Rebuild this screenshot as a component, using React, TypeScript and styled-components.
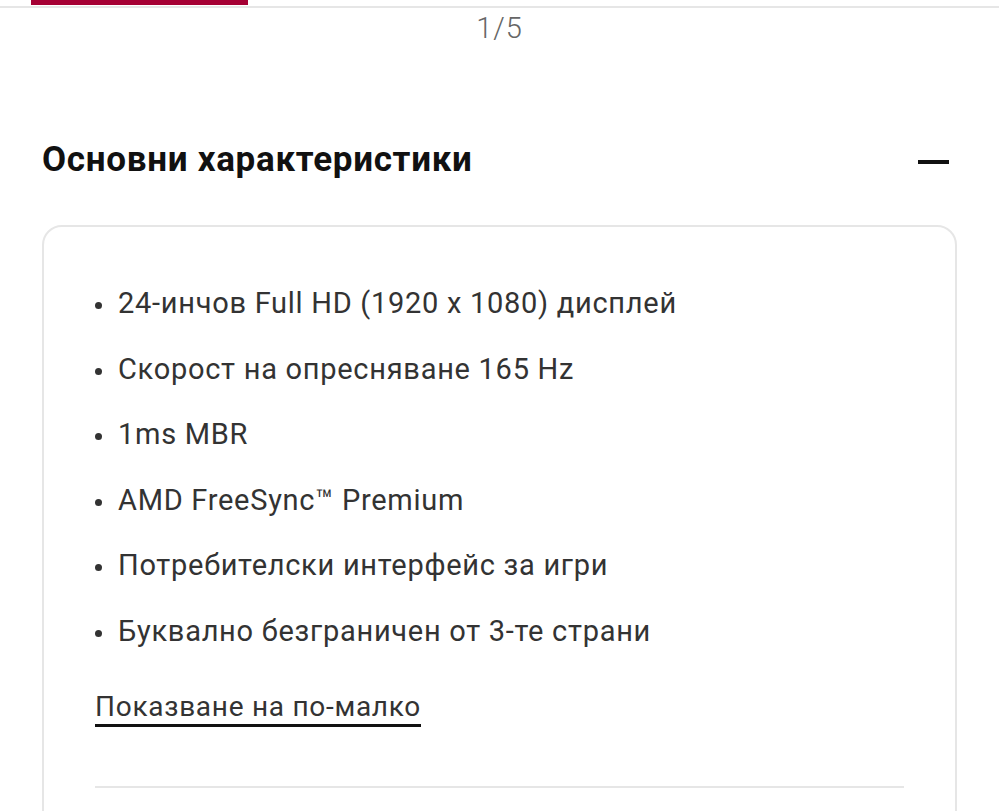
import React from 'react';
import styled, { createGlobalStyle } from 'styled-components';

const GlobalStyle = createGlobalStyle`
  html, body {
    margin: 0;
    padding: 0;
    background: #fff;
    overflow: hidden;
  }
  body {
    font-family: Roboto, "Noto Sans", sans-serif;
    color: #333;
    letter-spacing: 0.045em;
  }
`;

const specs = [
  '24-инчов Full HD (1920 x 1080) дисплей',
  'Скорост на опресняване 165 Hz',
  '1ms MBR',
  'AMD FreeSync™ Premium',
  'Потребителски интерфейс за игри',
  'Буквално безграничен от 3-те страни',
];

// Slider progress
const Track = styled.div`
  height: 6px;
  border-bottom: 2px solid #e6e6e6;
`;

const Fill = styled.div<{ $from: number; $width: number }>`
  margin-left: ${p => p.$from}px;
  width: ${p => p.$width}px;
  height: 5px;
  background: #a50034;
`;

const Counter = styled.div`
  margin-top: 3px;
  text-align: center;
  font-size: 29px;
  line-height: 34px;
  font-weight: 300;
  color: #666;
  letter-spacing: 0.03em;
`;

const Section = styled.section`
  padding: 0 42px;
  margin-top: 93px;
`;

const SectionHead = styled.div`
  display: flex;
  align-items: center;
  justify-content: space-between;
  padding-right: 8px;
`;

const Title = styled.h2`
  margin: 0;
  font-size: 35px;
  line-height: 44px;
  font-weight: 700;
  color: #111;
  letter-spacing: 0.02em;
`;

const Minus = styled.span`
  display: block;
  width: 31px;
  height: 4px;
  background: #111;
  margin-top: 4px;
`;

const Card = styled.div`
  margin-top: 43px;
  border: 2px solid #e6e6e6;
  border-radius: 20px;
  padding: 56px 51px 120px;
`;

const List = styled.ul`
  list-style: none;
  margin: 0;
  padding: 0;
  display: flex;
  flex-direction: column;
  gap: 25.6px;
`;

const Item = styled.li`
  position: relative;
  padding-left: 23px;
  font-size: 29px;
  line-height: 40px;
  color: #333;

  &::before {
    content: '';
    position: absolute;
    left: 0;
    top: 19px;
    width: 7px;
    height: 7px;
    border-radius: 50%;
    background: #333;
  }
`;

const LessLink = styled.a`
  display: inline-block;
  margin-top: 39px;
  font-size: 28px;
  line-height: 34px;
  color: #333;
  text-decoration: none;
  border-bottom: 3px solid #111;
  cursor: pointer;
`;

const Divider = styled.hr`
  margin: 59px 0 0;
  border: none;
  border-top: 2px solid #e6e6e6;
`;

export default function App() {
  return (
    <>
      <GlobalStyle />
      <Track>
        <Fill $from={31} $width={217} />
      </Track>
      <Counter>1/5</Counter>
      <Section>
        <SectionHead>
          <Title>Основни характеристики</Title>
          <Minus />
        </SectionHead>
        <Card>
          <List>
            {specs.map(s => (
              <Item key={s}>{s}</Item>
            ))}
          </List>
          <LessLink>Показване на по-малко</LessLink>
          <Divider />
        </Card>
      </Section>
    </>
  );
}
